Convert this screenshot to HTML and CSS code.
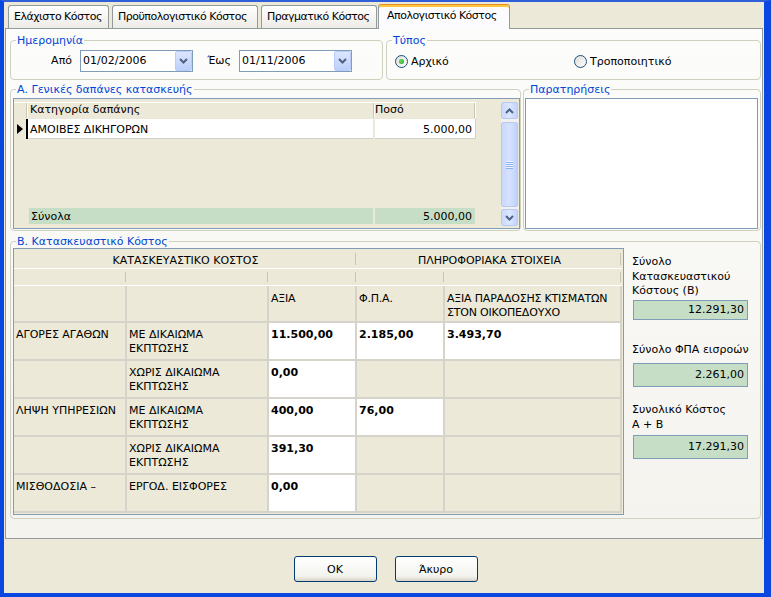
FILE: index.html
```html
<!DOCTYPE html>
<html lang="el">
<head>
<meta charset="utf-8">
<title>Απολογιστικό Κόστος</title>
<link rel="stylesheet" href="styles.css">
</head>
<body>
<div class="window">
  <div class="tabs">
    <div class="tab t1">Ελάχιστο Κόστος</div>
    <div class="tab t2">Προϋπολογιστικό Κόστος</div>
    <div class="tab t3">Πραγματικό Κόστος</div>
    <div class="tab t4 active">Απολογιστικό Κόστος</div>
  </div>
  <div class="panel">
    <div class="row row1">
      <fieldset class="group g-date">
        <legend>Ημερομηνία</legend>
        <div class="gcontent date-content">
          <span class="lbl lbl-from">Από</span>
          <div class="combo"><span class="cval">01/02/2006</span><span class="dropbtn"><svg width="9" height="6" viewBox="0 0 9 6"><path d="M1 1 L4.5 4.5 L8 1" fill="none" stroke="#4D6185" stroke-width="2"/></svg></span></div>
          <span class="lbl lbl-to">Έως</span>
          <div class="combo"><span class="cval">01/11/2006</span><span class="dropbtn"><svg width="9" height="6" viewBox="0 0 9 6"><path d="M1 1 L4.5 4.5 L8 1" fill="none" stroke="#4D6185" stroke-width="2"/></svg></span></div>
        </div>
      </fieldset>
      <fieldset class="group g-type">
        <legend>Τύπος</legend>
        <div class="gcontent type-content">
          <div class="opt opt1"><span class="radio checked"></span>Αρχικό</div>
          <div class="opt"><span class="radio"></span>Τροποποιητικό</div>
        </div>
      </fieldset>
    </div>
    <div class="row row2">
      <fieldset class="group g-a">
        <legend>Α. Γενικές δαπάνες κατασκευής</legend>
        <div class="dgrid">
          <div class="dmain">
            <div class="drow dhead"><div class="ind"></div><div class="c1">Κατηγορία δαπάνης</div><div class="c2">Ποσό</div></div>
            <div class="drow ddata"><div class="ind"><span class="arrow"></span></div><div class="c1">ΑΜΟΙΒΕΣ ΔΙΚΗΓΟΡΩΝ</div><div class="c2 right">5.000,00</div></div>
            <div class="dfill"></div>
            <div class="drow dtotal"><div class="ind"></div><div class="c1">Σύνολα</div><div class="c2 right">5.000,00</div></div>
          </div>
          <div class="vscroll">
            <div class="sbtn"><svg width="9" height="6" viewBox="0 0 9 6"><path d="M1 5 L4.5 1.5 L8 5" fill="none" stroke="#4D6185" stroke-width="2"/></svg></div>
            <div class="thumb"><span class="grip"></span></div>
            <div class="sbtn"><svg width="9" height="6" viewBox="0 0 9 6"><path d="M1 1 L4.5 4.5 L8 1" fill="none" stroke="#4D6185" stroke-width="2"/></svg></div>
          </div>
        </div>
      </fieldset>
      <fieldset class="group g-notes">
        <legend>Παρατηρήσεις</legend>
        <div class="notes"></div>
      </fieldset>
    </div>
    <div class="row row3">
      <fieldset class="group g-b">
        <legend>Β. Κατασκευαστικό Κόστος</legend>
        <div class="bcontent">
          <div class="bgrid">
            <div class="btable">
              <div class="hdr span3">ΚΑΤΑΣΚΕΥΑΣΤΙΚΟ ΚΟΣΤΟΣ</div>
              <div class="hdr span2">ΠΛΗΡΟΦΟΡΙΑΚΑ ΣΤΟΙΧΕΙΑ</div>
              <div class="hdr2"></div><div class="hdr2"></div><div class="hdr2"></div><div class="hdr2"></div><div class="hdr2"></div>
              <div class="cell hd"></div><div class="cell hd"></div><div class="cell hd">ΑΞΙΑ</div><div class="cell hd">Φ.Π.Α.</div><div class="cell hd">ΑΞΙΑ ΠΑΡΑΔΟΣΗΣ ΚΤΙΣΜΑΤΩΝ<br>ΣΤΟΝ ΟΙΚΟΠΕΔΟΥΧΟ</div>

              <div class="cell">ΑΓΟΡΕΣ ΑΓΑΘΩΝ</div><div class="cell">ΜΕ ΔΙΚΑΙΩΜΑ<br>ΕΚΠΤΩΣΗΣ</div><div class="cell w num">11.500,00</div><div class="cell w num">2.185,00</div><div class="cell w num">3.493,70</div>

              <div class="cell"></div><div class="cell">ΧΩΡΙΣ ΔΙΚΑΙΩΜΑ<br>ΕΚΠΤΩΣΗΣ</div><div class="cell w num">0,00</div><div class="cell"></div><div class="cell"></div>

              <div class="cell">ΛΗΨΗ ΥΠΗΡΕΣΙΩΝ</div><div class="cell">ΜΕ ΔΙΚΑΙΩΜΑ<br>ΕΚΠΤΩΣΗΣ</div><div class="cell w num">400,00</div><div class="cell w num">76,00</div><div class="cell"></div>

              <div class="cell"></div><div class="cell">ΧΩΡΙΣ ΔΙΚΑΙΩΜΑ<br>ΕΚΠΤΩΣΗΣ</div><div class="cell w num">391,30</div><div class="cell"></div><div class="cell"></div>

              <div class="cell">ΜΙΣΘΟΔΟΣΙΑ –</div><div class="cell">ΕΡΓΟΔ. ΕΙΣΦΟΡΕΣ</div><div class="cell w num">0,00</div><div class="cell"></div><div class="cell"></div>
            </div>
          </div>
          <div class="totals">
            <div class="tlabel tl1">Σύνολο<br>Κατασκευαστικού<br>Κόστους (Β)</div>
            <div class="tbox tb1">12.291,30</div>
            <div class="tlabel tl2">Σύνολο ΦΠΑ εισροών</div>
            <div class="tbox tb2">2.261,00</div>
            <div class="tlabel tl3">Συνολικό Κόστος<br>Α + Β</div>
            <div class="tbox tb3">17.291,30</div>
          </div>
        </div>
      </fieldset>
    </div>
  </div>
  <div class="buttons">
    <div class="btn">OK</div>
    <div class="btn">Άκυρο</div>
  </div>
</div>
</body>
</html>
```

FILE: styles.css
```css
* { box-sizing: border-box; }
html, body { margin: 0; padding: 0; }
body {
  width: 771px; height: 597px; overflow: hidden;
  background: #ECE9D8;
  font-family: "DejaVu Sans", "Liberation Sans", sans-serif;
  font-size: 11px; color: #000;
}
.window {
  width: 771px; height: 597px;
  display: flex; flex-direction: column;
  background: #ECE9D8;
  border-style: solid;
  border-color: #2E5FD8 #0A46E0 #0A46E0 #0A46E0;
  border-width: 2px 7px 4px 4px;
}

/* tabs */
.tabs { height: 26px; display: flex; align-items: flex-end; padding-left: 4px; }
.tab {
  height: 23px;
  border: 1px solid #919B9C; border-bottom: none;
  border-radius: 3px 3px 0 0;
  background: linear-gradient(#FFFFFF, #ECEBE6);
  padding: 4px 0 0 5px;
  line-height: 14px;
  letter-spacing: -0.5px;
  white-space: nowrap; overflow: hidden;
}
.t1 { width: 101px; }
.t2 { width: 146px; margin-left: 3px; }
.t3 { width: 116px; margin-left: 3px; }
.t4 { width: 132px; margin-left: 1px; }
.active {
  position: relative; z-index: 2;
  height: 25px; margin-bottom: -1px;
  background: #FCFCFE;
  border-top-color: #E68B2C;
  box-shadow: inset 0 2px #FFC83C;
  padding: 4px 0 0 8px;
}

/* panel */
.panel {
  width: 758px; height: 511px; margin-left: 1px;
  border: 1px solid #919B9C;
  background: linear-gradient(#FCFCFB, #F4F3EE);
  padding: 5px 1px 0 4px;
  display: flex; flex-direction: column;
}
.row { display: flex; }
.row1 { gap: 3px; }
.row2 { gap: 2px; margin-top: 3px; }
.row3 { margin-top: 4px; }

.group {
  margin: 0; padding: 0; min-width: 0;
  border: 1px solid #D0D0BF; border-radius: 4px;
}
.group legend {
  margin-left: 5px; padding: 0 1px;
  height: 13px; line-height: 13px;
  color: #0046D5; font-size: 11px;
}
.g-date { width: 373px; }
.g-type { width: 375px; }
.gcontent { height: 32px; padding-top: 3px; display: flex; align-items: flex-start; }

.date-content { padding-left: 29px; }
.lbl { height: 22px; line-height: 22px; text-align: right; }
.lbl-from { width: 32px; margin-right: 8px; }
.lbl-to { width: 31px; margin-left: 7px; margin-right: 8px; }
.combo {
  width: 113px; height: 22px;
  border: 1px solid #7F9DB9; background: #fff;
  display: flex; align-items: center;
}
.cval { flex: 1; padding-left: 2px; line-height: 20px; }
.dropbtn {
  width: 17px; height: 20px;
  border: 1px solid #BACCF7; border-radius: 2px;
  background: linear-gradient(#DCE6FE, #BCCFFB);
  display: flex; align-items: center; justify-content: center;
}

.type-content { padding-left: 8px; }
.opt { height: 22px; display: flex; align-items: center; }
.opt1 { width: 179px; }
.radio {
  width: 13px; height: 13px; border-radius: 50%;
  border: 1px solid #1C5180;
  background: linear-gradient(135deg, #DCDCD7, #FFFFFF);
  margin-right: 3px;
  display: flex; align-items: center; justify-content: center;
}
.radio.checked::after {
  content: ""; width: 5px; height: 5px; border-radius: 50%;
  background: radial-gradient(circle at 40% 40%, #6BDA66, #21A121);
}

/* grid A */
.g-a { width: 511px; }
.g-notes { width: 238px; }
.dgrid {
  width: 507px; height: 131px;
  margin: 2px 0 1px 2px;
  border: 1px solid #7F9DB9;
  background: #ECE9D8;
  display: flex;
}
.dmain { flex: 1; display: flex; flex-direction: column; padding-top: 3px; padding-bottom: 4px; }
.drow { display: flex; }
.ind { width: 14px; flex: none; }
.c1 { width: 347px; flex: none; padding-left: 2px; white-space: nowrap; }
.c2 { width: 101px; flex: none; padding-right: 3px; }
.right { text-align: right; }
.dhead { height: 16px; line-height: 16px; }
.dhead .c1, .dhead .c2 {
  box-shadow: inset 0 1px #fff, inset -1px 0 #fff, inset -2px 0 #C9C5B5;
}
.dhead .ind { box-shadow: inset 0 1px #fff, inset -1px 0 #fff, inset -2px 0 #C9C5B5; }
.ddata { height: 20px; margin-top: 1px; line-height: 17px; }
.ddata .c1, .ddata .c2 { padding-top: 2px; }
.ddata .ind { display: flex; align-items: center; padding-left: 3px; border-right: 2px solid #000; }
.arrow { width: 0; height: 0; border-left: 6px solid #000; border-top: 5px solid transparent; border-bottom: 5px solid transparent; }
.ddata .c1 { width: 345px; background: #fff; border-bottom: 1px solid #D4D0C8; margin-right: 2px; }
.ddata .c2 { background: #fff; border-bottom: 1px solid #D4D0C8; border-right: 1px solid #D4D0C8; }
.dfill { flex: 1; }
.dtotal { height: 16px; line-height: 17px; }
.dtotal .c1 { width: 344px; margin-left: 1px; margin-right: 2px; background: #C6DEC6; }
.dtotal .c2 { width: 100px; background: #C6DEC6; }

.vscroll {
  width: 17px; margin: 3px 1px 2px 0;
  display: flex; flex-direction: column;
  background: #F3F1EC;
}
.sbtn {
  height: 17px; flex: none;
  border: 1px solid #B7CAF5; border-radius: 2px;
  background: linear-gradient(90deg, #CBD9FC, #DCE6FE 50%, #C3D4FB);
  display: flex; align-items: center; justify-content: center;
}
.thumb {
  flex: 1; margin: 3px 0 2px;
  border: 1px solid #B7CAF5; border-radius: 2px;
  background: linear-gradient(90deg, #C9D8FC, #D6E2FD 50%, #BFD1FB);
  display: flex; align-items: center; justify-content: center;
}
.grip {
  width: 7px; height: 8px;
  background: repeating-linear-gradient(#EEF3FE 0 1px, #8CB0F8 1px 2px);
}
.notes {
  width: 233px; height: 131px;
  margin: 2px 2px 1px 1px;
  background: #fff; border: 1px solid #7F9DB9;
}

/* group B */
.g-b { width: 751px; }
.bcontent { height: 270px; display: flex; padding: 0 0 3px 2px; }
.bgrid {
  width: 611px; height: 267px;
  border: 1px solid #7F9DB9;
  background: #ECE9D8;
}
.btable {
  display: grid;
  grid-template-columns: 113px 142px 88px 88px 177px;
  grid-template-rows: 20px 17px 37px repeat(5, 38px);
}
.hdr {
  padding-top: 5px; line-height: 14px; text-align: center;
  border-bottom: 1px solid #fff;
  background: #ECE9D8 linear-gradient(#C9C5B5, #C9C5B5) no-repeat right 1px center / 1px 12px;
}
.span3 { grid-column: span 3; }
.span2 { grid-column: span 2; }
.hdr2 {
  border-bottom: 1px solid #fff;
  background: #ECE9D8 linear-gradient(#C9C5B5, #C9C5B5) no-repeat right 1px center / 1px 10px;
}
.cell {
  background: #ECE9D8;
  border-right: 2px solid #D6D3CA;
  border-bottom: 2px solid #D6D3CA;
  padding: 5px 2px 0 2px;
  line-height: 14px;
  white-space: nowrap;
}
.cell.hd { padding-top: 6px; letter-spacing: -0.2px; }
.w { background: #fff; }
.num { font-weight: bold; }

.totals {
  width: 116px; margin-left: 8px; padding-top: 7px;
  display: flex; flex-direction: column;
}
.tlabel { line-height: 14.5px; white-space: nowrap; }
.tbox {
  margin-left: 1px; width: 115px;
  background: #C6DEC6; border: 1px solid #7F9DB9;
  text-align: right; padding-right: 3px;
}
.tb1 { height: 20px; line-height: 18px; margin-top: 1.5px; }
.tl2 { margin-top: 23px; }
.tb2 { height: 24px; line-height: 22px; margin-top: 5.5px; }
.tl3 { margin-top: 16px; }
.tb3 { height: 24px; line-height: 22px; margin-top: 3px; }

/* buttons */
.buttons { display: flex; justify-content: center; gap: 18px; margin-top: 17px; padding-left: 3px; }
.btn {
  width: 83px; height: 26px;
  border: 1px solid #003C74; border-radius: 3px;
  background: linear-gradient(#FFFFFF, #F3F3EE 80%, #D8D3C7);
  display: flex; align-items: center; justify-content: center;
}
```
